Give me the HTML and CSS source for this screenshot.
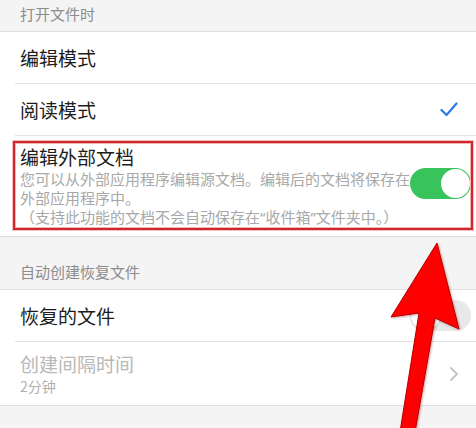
FILE: index.html
```html
<!DOCTYPE html>
<html lang="zh-CN">
<head>
    <meta charset="UTF-8">
    <meta name="viewport" content="width=device-width, initial-scale=1.0">
    <title>打开文件时</title>
    <link rel="stylesheet" href="styles.css">
</head>
<body>
    <div class="settings">
        <div class="section-head first">打开文件时</div>
        <div class="group">
            <div class="row">
                <span class="label">编辑模式</span>
            </div>
            <div class="row">
                <span class="label">阅读模式</span>
                <svg class="check" width="18" height="15" viewBox="0 0 18 15">
                    <path d="M1.5 8 L6.5 13 L16.5 1.5" fill="none" stroke="#2a7be6" stroke-width="2.2" stroke-linecap="round" stroke-linejoin="round"/>
                </svg>
            </div>
            <div class="row row-tall">
                <div class="text">
                    <div class="label">编辑外部文档</div>
                    <div class="desc">您可以从外部应用程序编辑源文档。编辑后的文档将保存在<br>外部应用程序中。<br>（支持此功能的文档不会自动保存在<span class="q">“</span>收件箱<span class="q">”</span>文件夹中。）</div>
                </div>
                <span class="toggle on"></span>
                <div class="mark-box"></div>
            </div>
        </div>

        <div class="section-head">自动创建恢复文件</div>
        <div class="group">
            <div class="row">
                <span class="label">恢复的文件</span>
                <span class="toggle off"></span>
            </div>
            <div class="row row-sub disabled">
                <div class="text">
                    <div class="label">创建间隔时间</div>
                    <div class="sub">2分钟</div>
                </div>
                <svg class="chevron" width="10" height="16" viewBox="0 0 10 16">
                    <path d="M2 2 L8 8 L2 14" fill="none" stroke="#c4c4c4" stroke-width="1.8" stroke-linecap="round" stroke-linejoin="round"/>
                </svg>
            </div>
        </div>
        <div class="filler"></div>
    </div>

    <svg class="arrow" width="476" height="428" viewBox="0 0 476 428">
        <polygon points="437,243 459,329 435,318 415,432 400,432 419,313 391,317" fill="#ff0000" stroke="#b30000" stroke-width="1" stroke-linejoin="round"/>
    </svg>
</body>
</html>
```

FILE: styles.css
```css
body {
    margin: 0;
    padding: 0;
    width: 476px;
    height: 428px;
    overflow: hidden;
    position: relative;
    background-color: #f4f4f4;
    font-family: "Noto Sans CJK SC", "Noto Sans", sans-serif;
}
.settings {
    display: flex;
    flex-direction: column;
}
.section-head {
    height: 52px;
    box-sizing: border-box;
    padding: 24px 0 0 20px;
    font-size: 15px;
    line-height: 22px;
    color: #8c8c8c;
}
.section-head.first {
    height: 31px;
    padding-top: 3px;
}
.group {
    background-color: #ffffff;
    border-top: 1px solid #dedede;
    border-bottom: 1px solid #dedede;
}
.row {
    position: relative;
    display: flex;
    align-items: center;
    justify-content: space-between;
    height: 51px;
    margin-left: 15px;
    padding: 0 5px;
}
.row + .row {
    border-top: 1px solid #e2e2e2;
}
.text {
    flex: 1;
    min-width: 0;
}
.label {
    font-size: 19px;
    line-height: 24px;
    color: #1c1c1c;
}
.check {
    margin-right: 13px;
}
.row-tall {
    height: 101px;
    align-items: flex-start;
    box-sizing: border-box;
    padding-top: 9px;
}
.row-tall .toggle {
    margin-top: 23px;
}
.desc {
    font-size: 15px;
    line-height: 19px;
    color: #a8a8a8;
    white-space: nowrap;
}
.q {
    font-family: "Noto Sans", sans-serif;
}
.toggle {
    position: relative;
    width: 61px;
    height: 31px;
    border-radius: 16px;
    box-sizing: border-box;
    flex-shrink: 0;
}
.toggle::after {
    content: "";
    position: absolute;
    top: 1px;
    width: 29px;
    height: 29px;
    border-radius: 50%;
    background-color: #ffffff;
}
.toggle.on {
    background-color: #38c35c;
}
.toggle.on::after {
    right: 1px;
}
.toggle.off {
    background-color: #e8e8e8;
}
.toggle.off::after {
    left: 1px;
    box-shadow: 0 1px 3px rgba(0, 0, 0, 0.15);
}
.mark-box {
    position: absolute;
    top: 5px;
    left: -2px;
    right: 3px;
    bottom: 6px;
    border: 2px solid #d0262c;
    box-shadow: inset 0 0 0 1px #f2b3b3, 0 0 0 1px #f4c2c2;
    pointer-events: none;
}
.row-sub {
    height: 63px;
}
.disabled .label {
    color: #b8b8b8;
}
.sub {
    font-size: 14px;
    line-height: 20px;
    color: #b0b0b0;
}
.chevron {
    margin-right: 12px;
}
.filler {
    flex: 1;
}
.arrow {
    position: absolute;
    top: 0;
    left: 0;
    pointer-events: none;
    filter: drop-shadow(1px 1px 1px rgba(120, 0, 0, 0.35));
}
```
